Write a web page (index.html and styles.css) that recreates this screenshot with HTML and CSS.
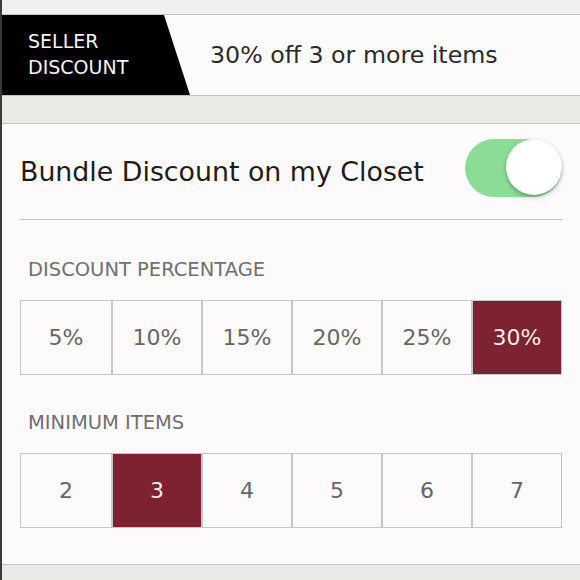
FILE: index.html
```html
<!DOCTYPE html>
<html>
<head>
<meta charset="utf-8">
<link rel="stylesheet" href="styles.css">
</head>
<body>
<div class="page">
  <div class="topgap"></div>
  <div class="banner">
    <div class="tag">SELLER<br>DISCOUNT</div>
    <div class="banner-text">30% off 3 or more items</div>
  </div>
  <div class="gap"></div>
  <div class="card">
    <div class="row">
      <div class="title">Bundle Discount on my Closet</div>
      <div class="toggle"><div class="knob"></div></div>
    </div>
    <div class="divider"></div>
    <div class="label">DISCOUNT PERCENTAGE</div>
    <div class="seg">
      <div class="cell">5%</div>
      <div class="cell">10%</div>
      <div class="cell">15%</div>
      <div class="cell">20%</div>
      <div class="cell">25%</div>
      <div class="cell on">30%</div>
    </div>
    <div class="label label2">MINIMUM ITEMS</div>
    <div class="seg">
      <div class="cell">2</div>
      <div class="cell on">3</div>
      <div class="cell">4</div>
      <div class="cell">5</div>
      <div class="cell">6</div>
      <div class="cell">7</div>
    </div>
  </div>
  <div class="bottom"></div>
</div>
</body>
</html>
```

FILE: styles.css
```css
html, body {
  margin: 0;
  padding: 0;
  background: #ebe9e5;
}
.page {
  width: 580px;
  height: 580px;
  overflow: hidden;
  border-left: 2px solid #3a3a3a;
  box-sizing: border-box;
  font-family: "DejaVu Sans", "Open Sans", sans-serif;
}
.topgap {
  height: 14px;
  background: #f1f0ee;
  border-bottom: 1px solid #c6c6c6;
}
.banner {
  height: 80px;
  background: #fcfbfb;
  display: flex;
  align-items: center;
  border-bottom: 1px solid #c4c4c4;
}
.tag {
  width: 188px;
  height: 100%;
  box-sizing: border-box;
  background: #000;
  clip-path: polygon(0 0, 162px 0, 188px 100%, 0 100%);
  color: #f4f4f4;
  font-size: 19px;
  line-height: 26px;
  padding: 13px 0 0 26px;
}
.banner-text {
  margin-left: 20px;
  font-size: 23.7px;
  color: #2a2a2a;
}
.gap {
  height: 27px;
  background: #ebe9e5;
  border-bottom: 1px solid #c4c4c4;
}
.card {
  background: #fcfafa;
  height: 441px;
  box-sizing: border-box;
  padding: 0 18px 0 18px;
  border-bottom: 1px solid #c4c4c4;
}
.row {
  height: 95px;
  display: flex;
  align-items: center;
  justify-content: space-between;
}
.title {
  font-size: 26.8px;
  color: #1c1c1c;
}
.toggle {
  width: 97px;
  height: 58px;
  border-radius: 29px;
  background: #8bdc95;
  position: relative;
  margin-top: -8px;
}
.knob {
  position: absolute;
  right: 0;
  top: 0;
  width: 56px;
  height: 56px;
  border-radius: 50%;
  background: #fff;
  box-shadow: 0 2px 4px rgba(0,0,0,0.3);
}
.divider {
  height: 1px;
  background: #c4c4c4;
}
.label {
  font-size: 19.5px;
  color: #707070;
  margin: 38px 0 0 8px;
  line-height: 24px;
}
.label2 {
  margin-top: 36px;
}
.seg {
  display: grid;
  grid-template-columns: repeat(6, 1fr);
  height: 75px;
  margin-top: 18px;
  border: 1px solid #c6c6c6;
  box-sizing: border-box;
}
.cell {
  display: flex;
  align-items: center;
  justify-content: center;
  font-size: 22px;
  color: #666;
  border-left: 2px solid #c6c6c6;
}
.cell:first-child {
  border-left: none;
}
.cell.on {
  background: #7c2230;
  color: #f6eaea;
}
.bottom {
  height: 20px;
  background: #ebe9e5;
}
```
